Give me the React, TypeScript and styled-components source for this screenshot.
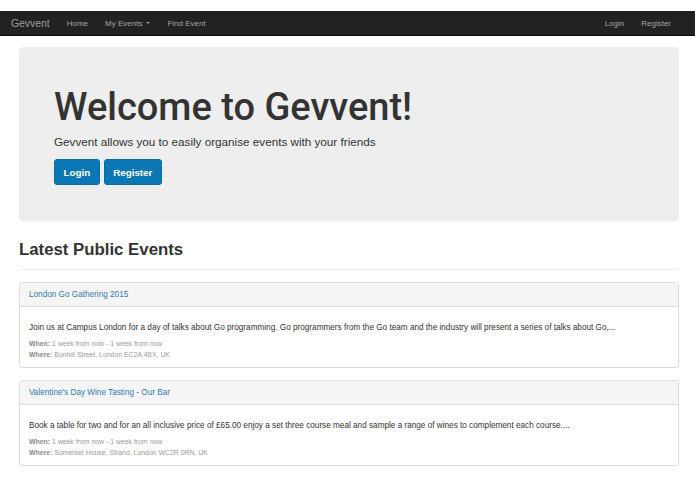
import React from "react";
import styled, { createGlobalStyle } from "styled-components";

const Global = createGlobalStyle`
  html, body { margin: 0; padding: 0; background: #fff; }
  body { font-family: "Liberation Sans", Arial, Helvetica, sans-serif; color: #333; }
  * { box-sizing: border-box; }
`;

const Page = styled.div`
  width: 695px;
  padding-top: 11px;
`;

const Navbar = styled.nav`
  height: 25px;
  background: #222;
  border-bottom: 1px solid #080808;
  display: flex;
  align-items: center;
  justify-content: space-between;
  padding: 0 24px 0 11px;
`;

const NavGroup = styled.div`
  display: flex;
  align-items: center;
  gap: 17px;
`;

const Brand = styled.a`
  color: #9d9d9d;
  font-size: 10.4px;
`;

const NavLink = styled.a`
  color: #a4a4a4;
  font-size: 8px;
  display: flex;
  align-items: center;
  gap: 4px;
`;

const Caret = styled.span`
  display: inline-block;
  width: 0;
  height: 0;
  border-top: 2.5px solid #9d9d9d;
  border-left: 2.5px solid transparent;
  border-right: 2.5px solid transparent;
`;

const Container = styled.main`
  padding: 11px 16px 0 19px;
`;

const Jumbotron = styled.section`
  background: #eee;
  border-radius: 4px;
  height: 174px;
  padding: 38px 35px 0 35px;
`;

const Title = styled.h1`
  margin: 0;
  font-family: Roboto, "Liberation Sans", Arial, sans-serif;
  font-size: 38px;
  font-weight: 500;
  line-height: 44px;
  color: #333;
`;

const Lead = styled.p`
  margin: 5px 0 9px;
  font-size: 11.7px;
  line-height: 16px;
  color: #333;
`;

const Buttons = styled.div`
  display: flex;
  gap: 4px;
`;

const Button = styled.a`
  display: inline-flex;
  align-items: center;
  justify-content: center;
  height: 26px;
  padding: 0 8.5px;
  background: #0b78b5;
  border: 1px solid #0a6da4;
  border-radius: 3px;
  color: #fff;
  font-size: 9.8px;
  font-weight: 700;
`;

const SectionHeader = styled.div`
  margin-top: 17px;
  padding-bottom: 7px;
  border-bottom: 1px solid #eee;
`;

const SectionTitle = styled.h2`
  margin: 0;
  font-size: 16.8px;
  line-height: 24px;
  font-weight: 700;
  color: #333;
`;

const PanelList = styled.div`
  display: flex;
  flex-direction: column;
  gap: 12px;
  margin-top: 12px;
`;

const Panel = styled.div`
  border: 1px solid #ddd;
  border-radius: 3px;
  background: #fff;
  height: 86px;
`;

const PanelHeading = styled.div`
  background: #f5f5f5;
  border-bottom: 1px solid #ddd;
  height: 24px;
  padding: 0 9px;
  display: flex;
  align-items: center;
`;

const PanelTitle = styled.a`
  color: #337ab7;
  font-size: 8.2px;
`;

const PanelBody = styled.div`
  padding: 15px 9px 0;
`;

const Desc = styled.p`
  margin: 0 0 6px;
  font-size: 8.2px;
  line-height: 11px;
  color: #333;
`;

const Meta = styled.div`
  font-size: 6.9px;
  line-height: 10.5px;
  color: #999;
  b { color: #888; font-weight: 700; }
`;

const events = [
  {
    title: "London Go Gathering 2015",
    desc: "Join us at Campus London for a day of talks about Go programming. Go programmers from the Go team and the industry will present a series of talks about Go,...",
    when: "1 week from now - 1 week from now",
    where: "Bonhill Street, London EC2A 4BX, UK",
  },
  {
    title: "Valentine's Day Wine Tasting - Our Bar",
    desc: "Book a table for two and for an all inclusive price of £65.00 enjoy a set three course meal and sample a range of wines to complement each course....",
    when: "1 week from now - 1 week from now",
    where: "Somerset House, Strand, London WC2R 0RN, UK",
  },
];

export default function App() {
  return (
    <Page>
      <Global />
      <Navbar>
        <NavGroup>
          <Brand>Gevvent</Brand>
          <NavLink>Home</NavLink>
          <NavLink>
            My Events <Caret />
          </NavLink>
          <NavLink>Find Event</NavLink>
        </NavGroup>
        <NavGroup>
          <NavLink>Login</NavLink>
          <NavLink>Register</NavLink>
        </NavGroup>
      </Navbar>
      <Container>
        <Jumbotron>
          <Title>Welcome to Gevvent!</Title>
          <Lead>Gevvent allows you to easily organise events with your friends</Lead>
          <Buttons>
            <Button>Login</Button>
            <Button>Register</Button>
          </Buttons>
        </Jumbotron>
        <SectionHeader>
          <SectionTitle>Latest Public Events</SectionTitle>
        </SectionHeader>
        <PanelList>
          {events.map((e) => (
            <Panel key={e.title}>
              <PanelHeading>
                <PanelTitle>{e.title}</PanelTitle>
              </PanelHeading>
              <PanelBody>
                <Desc>{e.desc}</Desc>
                <Meta>
                  <b>When:</b> {e.when}
                </Meta>
                <Meta>
                  <b>Where:</b> {e.where}
                </Meta>
              </PanelBody>
            </Panel>
          ))}
        </PanelList>
      </Container>
    </Page>
  );
}
